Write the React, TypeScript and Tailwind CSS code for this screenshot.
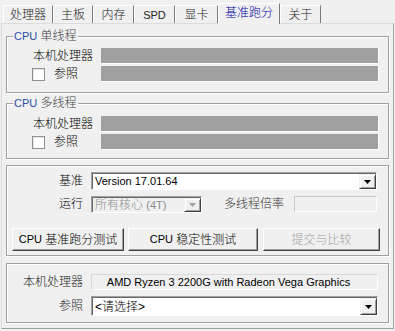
import React from "react";

const tabs = [
  { name: "处理器", w: "w-[50px]" },
  { name: "主板", w: "w-[40px]" },
  { name: "内存", w: "w-[41px]" },
  { name: "SPD", w: "w-[41px]", latin: true },
  { name: "显卡", w: "w-[43px]" },
  { name: "基准跑分", w: "w-[62px]", active: true },
  { name: "关于", w: "w-[41px]" },
];

function Arrow({ disabled }: { disabled?: boolean }) {
  return (
    <svg width="7" height="4" viewBox="0 0 7 4">
      <polygon points="0,0 7,0 3.5,4" fill={disabled ? "#a0a0a0" : "#000"} />
    </svg>
  );
}

function DropButton({ disabled }: { disabled?: boolean }) {
  return (
    <div className="flex h-full w-[17px] items-center justify-center border-t border-l border-t-[#f0f0f0] border-l-[#f0f0f0] border-b border-r border-b-[#404040] border-r-[#404040] bg-[#f0f0f0] shadow-[inset_1px_1px_0_#fff,inset_-1px_-1px_0_#a0a0a0]">
      <Arrow disabled={disabled} />
    </div>
  );
}

function Combo({ text, w, h, disabled }: { text: React.ReactNode; w: string; h: string; disabled?: boolean }) {
  return (
    <div
      className={`${w} ${h} flex items-stretch border-t border-l border-t-[#a0a0a0] border-l-[#a0a0a0] border-b border-r border-b-white border-r-white shadow-[inset_1px_1px_0_#696969] pt-px pl-px ${
        disabled ? "bg-[#f0f0f0] text-[#8c8c8c]" : "bg-white text-black"
      }`}
    >
      <div className="flex flex-1 items-center pl-[2px] leading-none">{text}</div>
      <DropButton disabled={disabled} />
    </div>
  );
}

function Bar() {
  return <div className="h-[16px] w-[278px] border-r border-b border-white bg-[#a0a0a0]" />;
}

function CheckBox() {
  return <div className="h-[13px] w-[13px] border border-[#8e8f8f] bg-white shadow-[inset_1px_1px_0_#e6e6e6]" />;
}

function Group({ h, mt, legend, children }: { h: string; mt: string; legend?: string; children: React.ReactNode }) {
  return (
    <div className={`${h} ${mt} border border-[#a0a0a0] shadow-[1px_1px_0_#fff,inset_1px_1px_0_#fff]`}>
      {legend && (
        <div className="-mt-[8px] ml-[6px] w-fit bg-[#f0f0f0] px-[1px] leading-[14px]">
          <span className="text-[11px] text-[#2b4fa6]">CPU</span>
          <span className="text-[#3c3c3c]"> {legend}</span>
        </div>
      )}
      {children}
    </div>
  );
}

function Button({ children, w, ml, disabled }: { children: React.ReactNode; w: string; ml?: string; disabled?: boolean }) {
  return (
    <div
      className={`${w} ${ml ?? ""} flex h-[23px] items-center justify-center border-t border-l border-t-white border-l-white border-b border-r border-b-[#404040] border-r-[#404040] shadow-[inset_-1px_-1px_0_#a0a0a0] ${
        disabled ? "text-[#a0a0a0]" : "text-black"
      }`}
    >
      {children}
    </div>
  );
}

function CpuSection({ legend, h, mt, rowMt }: { legend: string; h: string; mt: string; rowMt: string }) {
  return (
    <Group h={h} mt={mt} legend={legend}>
      <div className={`${rowMt} flex items-center pl-[26px]`}>
        <div className="w-[68px] leading-[16px] text-black">本机处理器</div>
        <Bar />
      </div>
      <div className="mt-[2px] flex items-center pl-[26px]">
        <div className="-ml-px flex w-[69px] items-center">
          <CheckBox />
          <span className="ml-[9px] leading-[16px] text-black">参照</span>
        </div>
        <Bar />
      </div>
    </Group>
  );
}

export default function App() {
  return (
    <div
      className="h-[331px] w-[395px] overflow-hidden bg-[#f0f0f0] text-[12px] font-light"
      style={{ fontFamily: '"Liberation Sans", "Noto Sans CJK SC", sans-serif' }}
    >
      {/* tab strip */}
      <div className="flex h-[23px] items-end pl-[3px]">
        {tabs.map((t) => (
          <div
            key={t.name}
            className={`${t.w} flex items-center justify-center border-t border-l border-t-white border-l-white border-r border-r-[#7a7a7a] bg-[#f0f0f0] ${
              t.active ? "relative z-10 -mb-px h-[21px] pb-[2px] text-[#0000a8]" : "h-[18px] pt-px text-[#222]"
            } ${t.latin ? "text-[11px]" : ""}`}
          >
            {t.name}
          </div>
        ))}
      </div>

      {/* tab page */}
      <div className="ml-[1px] h-[306px] w-[393px] border border-t-[#dcdcdc] border-l-[#dcdcdc] border-b-[#a0a0a0] border-r-[#a0a0a0] px-[4px]">
        <CpuSection legend="单线程" h="h-[57px]" mt="mt-[12px]" rowMt="mt-[5px]" />
        <CpuSection legend="多线程" h="h-[56px]" mt="mt-[10px]" rowMt="mt-[6px]" />

        <Group h="h-[91px]" mt="mt-[6px]">
          <div className="mt-[6px] flex items-center">
            <div className="w-[76px] text-right text-black">基准</div>
            <div className="ml-[8px]">
              <Combo w="w-[286px]" h="h-[18px]" text={<span className="text-[11px]">Version 17.01.64</span>} />
            </div>
          </div>
          <div className="mt-[5px] flex items-center">
            <div className="w-[76px] text-right text-black">运行</div>
            <div className="ml-[8px]">
              <Combo
                w="w-[111px]"
                h="h-[17px]"
                disabled
                text={
                  <span>
                    所有核心 <span className="text-[11px]">(4T)</span>
                  </span>
                }
              />
            </div>
            <div className="ml-[22px] text-[#333]">多线程倍率</div>
            <div className="ml-[10px] h-[16px] w-[83px] border border-[#c8c8c8] border-b-white border-r-white bg-[#f0f0f0]" />
          </div>
          <div className="mt-[15px] flex pl-[5px]">
            <Button w="w-[112px]">
              <span className="text-[11px]">CPU</span>&nbsp;基准跑分测试
            </Button>
            <Button w="w-[130px]" ml="ml-[4px]">
              <span className="text-[11px]">CPU</span>&nbsp;稳定性测试
            </Button>
            <Button w="w-[117px]" ml="ml-[5px]" disabled>
              提交与比较
            </Button>
          </div>
        </Group>

        <Group h="h-[60px]" mt="mt-[7px]">
          <div className="mt-[9px] flex items-center">
            <div className="w-[76px] text-right text-[#222]">本机处理器</div>
            <div className="ml-[8px] flex h-[16px] w-[287px] items-center justify-center border border-[#dadada] border-b-white border-r-white bg-[#f0f0f0] pr-[12px] text-[11px] text-black">
              AMD Ryzen 3 2200G with Radeon Vega Graphics
            </div>
          </div>
          <div className="mt-[5px] flex items-center">
            <div className="w-[76px] text-right text-[#222]">参照</div>
            <div className="ml-[8px]">
              <Combo w="w-[287px]" h="h-[20px]" text={<span>&lt;请选择&gt;</span>} />
            </div>
          </div>
        </Group>
      </div>
    </div>
  );
}
